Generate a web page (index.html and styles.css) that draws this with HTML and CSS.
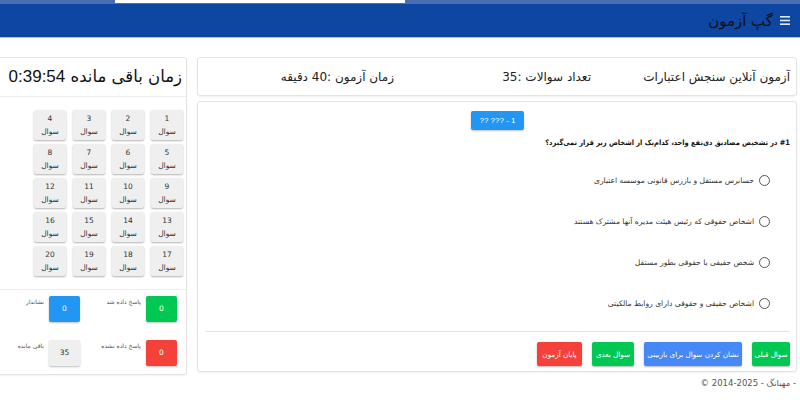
FILE: index.html
```html
<!DOCTYPE html>
<html lang="fa" dir="rtl">
<head>
  <meta charset="utf-8">
  <title>گپ آزمون</title>
  <link rel="stylesheet" href="styles.css">
</head>
<body>
  <div class="strip"><div class="strip-white"></div></div>
  <nav class="navbar">
    <svg class="menu-icon" width="10" height="9" viewBox="0 0 10 9">
      <rect x="0" y="0" width="10" height="1.6" fill="#dfe6f3"/>
      <rect x="0" y="3.7" width="10" height="1.6" fill="#dfe6f3"/>
      <rect x="0" y="7.4" width="10" height="1.6" fill="#dfe6f3"/>
    </svg>
    <span class="brand">گپ آزمون</span>
  </nav>

  <div class="page">
    <div class="main">
      <div class="card info">
        <span class="info-title">آزمون آنلاین سنجش اعتبارات</span>
        <span class="info-count">تعداد سوالات :35</span>
        <span class="info-time">زمان آزمون :40 دقیقه</span>
      </div>

      <div class="card question">
        <div class="badge-row"><span class="badge">?? ??? - 1</span></div>
        <p class="question-text">#1 در تشخیص مصادیق ذی‌نفع واحد، کدام‌یک از اشخاص زیر قرار نمی‌گیرد؟</p>
        <div class="options">
          <label class="option"><span class="radio"></span>حسابرس مستقل و بازرس قانونی موسسه اعتباری</label>
          <label class="option"><span class="radio"></span>اشخاص حقوقی که رئیس هیئت مدیره آنها مشترک هستند</label>
          <label class="option"><span class="radio"></span>شخص حقیقی یا حقوقی بطور مستقل</label>
          <label class="option"><span class="radio"></span>اشخاص حقیقی و حقوقی دارای روابط مالکیتی</label>
        </div>
        <div class="actions">
          <button class="btn green btn-prev">سوال قبلی</button>
          <button class="btn blue btn-mark">نشان کردن سوال برای بازبینی</button>
          <button class="btn green btn-next">سوال بعدی</button>
          <button class="btn red btn-end">پایان آزمون</button>
        </div>
      </div>

      <div class="footer">© 2014-2025 - مهبانگ -</div>
    </div>

    <div class="card sidebar">
      <div class="timer">زمان باقی مانده <span class="clock">0:39:54</span></div>
      <div class="qgrid">
        <div class="qbtn"><span>1</span><span>سوال</span></div>
        <div class="qbtn"><span>2</span><span>سوال</span></div>
        <div class="qbtn"><span>3</span><span>سوال</span></div>
        <div class="qbtn"><span>4</span><span>سوال</span></div>
        <div class="qbtn"><span>5</span><span>سوال</span></div>
        <div class="qbtn"><span>6</span><span>سوال</span></div>
        <div class="qbtn"><span>7</span><span>سوال</span></div>
        <div class="qbtn"><span>8</span><span>سوال</span></div>
        <div class="qbtn"><span>9</span><span>سوال</span></div>
        <div class="qbtn"><span>10</span><span>سوال</span></div>
        <div class="qbtn"><span>11</span><span>سوال</span></div>
        <div class="qbtn"><span>12</span><span>سوال</span></div>
        <div class="qbtn"><span>13</span><span>سوال</span></div>
        <div class="qbtn"><span>14</span><span>سوال</span></div>
        <div class="qbtn"><span>15</span><span>سوال</span></div>
        <div class="qbtn"><span>16</span><span>سوال</span></div>
        <div class="qbtn"><span>17</span><span>سوال</span></div>
        <div class="qbtn"><span>18</span><span>سوال</span></div>
        <div class="qbtn"><span>19</span><span>سوال</span></div>
        <div class="qbtn"><span>20</span><span>سوال</span></div>
      </div>
      <div class="legend">
        <div class="legend-item"><span class="box green">0</span><span class="legend-label">پاسخ داده شد</span></div>
        <div class="legend-item"><span class="box blue">0</span><span class="legend-label">نشاندار</span></div>
        <div class="legend-item"><span class="box red">0</span><span class="legend-label">پاسخ داده نشده</span></div>
        <div class="legend-item"><span class="box gray">35</span><span class="legend-label">باقی مانده</span></div>
      </div>
    </div>
  </div>
</body>
</html>
```

FILE: styles.css
```css
html, body {
  margin: 0;
  padding: 0;
  overflow: hidden;
}
body {
  font-family: "DejaVu Sans", "Noto Sans", sans-serif;
  background-color: #fff;
  color: #222;
  width: 800px;
  height: 400px;
}
.strip {
  height: 4px;
  background-color: #4a6db3;
  direction: ltr;
  display: flex;
}
.strip-white {
  margin-left: 115px;
  width: 290px;
  height: 3px;
  background-color: #fff;
}
.navbar {
  height: 33px;
  background-color: #0d47a1;
  border-bottom: 1px solid #b9c1cf;
  display: flex;
  align-items: center;
  padding-right: 10px;
  gap: 7px;
}
.brand {
  font-size: 15px;
  color: #111;
}
.page {
  display: flex;
  gap: 10px;
  padding: 19px 3px 0 0;
}
.card {
  background-color: #fff;
  border: 1px solid #e4e4e4;
  border-radius: 3px;
  box-shadow: 0 1px 2px rgba(0,0,0,0.06);
  box-sizing: border-box;
}
.main {
  width: 600px;
  flex: none;
}
.info {
  height: 39px;
  display: flex;
  align-items: center;
  padding-right: 6px;
  font-size: 12px;
  color: #222;
  white-space: nowrap;
}
.info-title {
  width: 147px;
}
.info-count {
  margin-right: 52px;
  width: 88px;
}
.info-time {
  margin-right: 109px;
}
.question {
  margin-top: 5px;
  height: 271px;
  padding: 9px 6px 5px 7px;
}
.badge-row {
  display: flex;
  justify-content: center;
}
.badge {
  font-family: "Liberation Sans", sans-serif;
  background-color: #2196f3;
  color: #fff;
  font-size: 8px;
  height: 19px;
  line-height: 19px;
  padding: 0 8px;
  border-radius: 2px;
  box-shadow: 0 1px 2px rgba(0,0,0,0.25);
  direction: ltr;
}
.question-text {
  margin: 6px 0 0 0;
  font-size: 7.4px;
  font-stretch: condensed;
  font-weight: bold;
  line-height: 14px;
  color: #111;
}
.options {
  margin-top: 10px;
  padding-right: 20px;
}
.option {
  height: 41px;
  display: flex;
  align-items: center;
  gap: 5px;
  font-size: 7.6px;
  color: #333;
}
.radio {
  width: 9px;
  height: 9px;
  border: 1px solid #555;
  border-radius: 50%;
  flex: none;
}
.actions {
  margin-top: 7px;
  border-top: 1px solid #e2e2e2;
  padding-top: 10px;
  display: flex;
  gap: 10px;
}
.btn {
  font-family: inherit;
  height: 24px;
  padding: 0;
  border: none;
  border-radius: 2px;
  color: #fff;
  font-size: 7.2px;
  text-align: center;
  white-space: nowrap;
  box-shadow: 0 1px 2px rgba(0,0,0,0.3);
}
.btn-prev {
  width: 38px;
}
.btn-mark {
  width: 98px;
}
.btn-next {
  width: 42px;
}
.btn-end {
  width: 45px;
}
.btn.green {
  background-color: #00c853;
}
.btn.blue {
  background-color: #4688f5;
}
.btn.red {
  background-color: #f4413a;
}
.footer {
  margin-top: 6px;
  font-size: 8.5px;
  color: #555;
  direction: ltr;
  text-align: right;
  padding-right: 1px;
}
.sidebar {
  width: 195px;
  height: 318px;
  flex: none;
}
.timer {
  height: 38px;
  line-height: 38px;
  padding-right: 4px;
  font-size: 16.5px;
  color: #111;
  border-bottom: 1px solid #ececec;
  white-space: nowrap;
}
.clock {
  font-family: "Liberation Sans", sans-serif;
  font-size: 17px;
}
.qgrid {
  display: grid;
  grid-template-columns: repeat(4, 32px);
  grid-auto-rows: 30px;
  column-gap: 7px;
  row-gap: 4px;
  padding: 13px 3px 13px 0;
  border-bottom: 1px solid #ececec;
}
.qbtn {
  background-color: #efefef;
  border-radius: 2px;
  box-shadow: 0 1px 2px rgba(0,0,0,0.3);
  display: flex;
  flex-direction: column;
  align-items: center;
  justify-content: center;
  font-size: 7.5px;
  line-height: 13px;
  color: #333;
}
.legend {
  display: grid;
  grid-template-columns: 97px 1fr;
  row-gap: 18px;
  padding: 6px 9px 0 0;
}
.legend-item {
  display: flex;
  align-items: flex-start;
  gap: 5px;
}
.box {
  width: 31px;
  height: 26px;
  line-height: 26px;
  text-align: center;
  border-radius: 2px;
  font-size: 7.5px;
  color: #fff;
  box-shadow: 0 1px 2px rgba(0,0,0,0.25);
  flex: none;
}
.box.green {
  background-color: #00c853;
}
.box.blue {
  background-color: #2196f3;
}
.box.red {
  background-color: #f4413a;
}
.box.gray {
  background-color: #efefef;
  color: #333;
}
.legend-label {
  font-size: 6px;
  color: #555;
  margin-top: 2px;
}
```
